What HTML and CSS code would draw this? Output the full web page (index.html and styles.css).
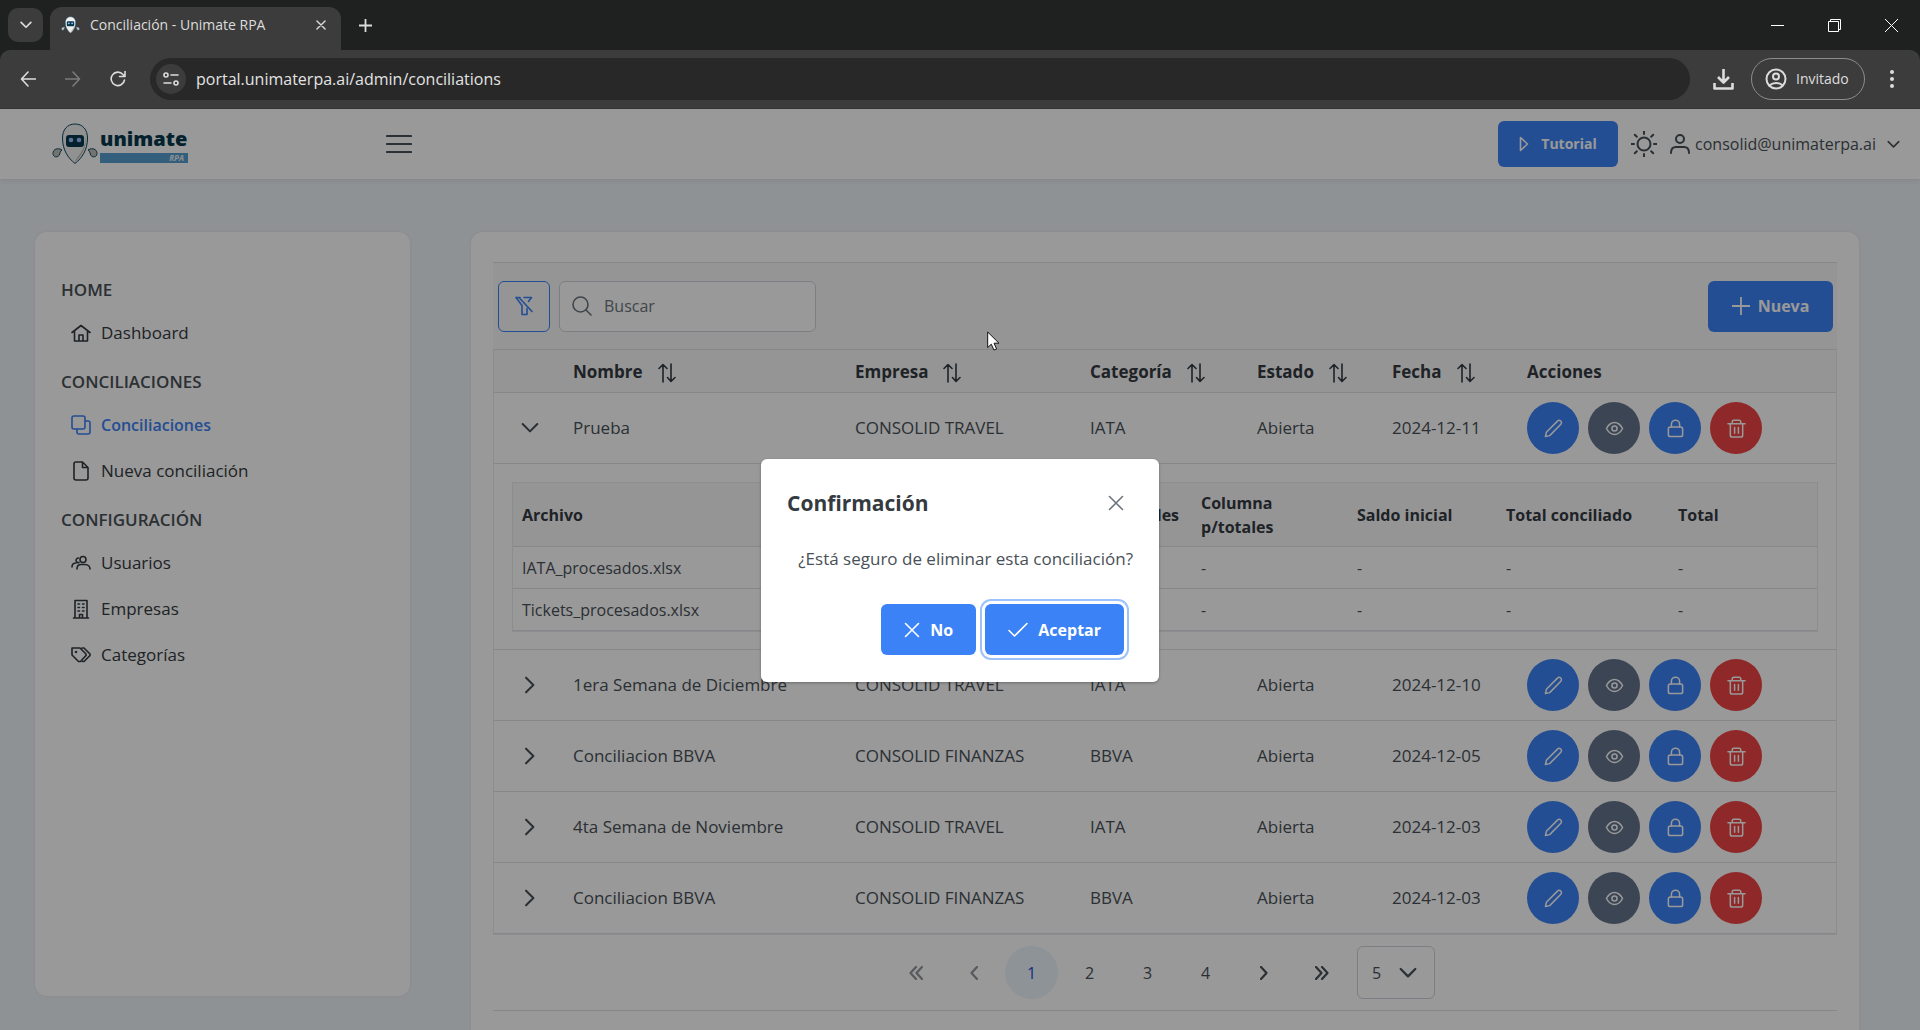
FILE: index.html
```html
<!DOCTYPE html>
<html lang="es">
<head>
<meta charset="utf-8">
<title>Conciliación - Unimate RPA</title>
<link rel="stylesheet" href="styles.css">
</head>
<body>
<svg class="sprite" aria-hidden="true">
  <symbol id="i-chev" viewBox="0 0 16 16"><path d="M1.5 4.5 8 11l6.5-6.5"/></symbol>
  <symbol id="i-right" viewBox="0 0 16 16"><path d="M4.5 1.500 11 8l-6.500 6.500"/></symbol>
  <symbol id="i-x" viewBox="0 0 16 16"><path d="M1.500 1.500l13 13M14.500 1.500l-13 13"/></symbol>
  <symbol id="i-plus" viewBox="0 0 16 16"><path d="M8 0v16M0 8h16"/></symbol>
  <symbol id="i-check" viewBox="0 0 20 16"><path d="M1 8.500 6.500 14 19 1.500"/></symbol>
  <symbol id="i-sort" viewBox="0 0 18 20"><path d="M5 19V2M1 5.500 5 1.500l4 4M13 1v17M9.500 14.500l3.500 4 4-4"/></symbol>
  <symbol id="i-pencil" viewBox="0 0 20 20"><path d="M1.500 18.500l1-4.500L14.200 2.200a2.300 2.300 0 0 1 3.500 3.300L6 17.500z"/></symbol>
  <symbol id="i-eye" viewBox="0 0 20 20"><path d="M1.500 10C4 5.500 7 3.700 10 3.700s6 1.800 8.500 6.300c-2.500 4.500-5.500 6.300-8.500 6.300S4 14.500 1.500 10z"/><circle cx="10" cy="10" r="2.700"/></symbol>
  <symbol id="i-lock" viewBox="0 0 20 20"><rect x="2.500" y="8.500" width="15" height="10" rx="2"/><path d="M5.700 8.500V5.500a4.300 4.300 0 0 1 8.600 0v3"/></symbol>
  <symbol id="i-trash" viewBox="0 0 20 20"><path d="M1 5h18M3.500 5v12a2 2 0 0 0 2 2h9a2 2 0 0 0 2-2V5M5.500 5V3a1.700 1.700 0 0 1 1.700-1.700h5.600A1.700 1.700 0 0 1 14.500 3v2M8 9v6M12 9v6"/></symbol>
  <symbol id="i-robot" viewBox="0 0 46 42"><path d="M23 1c-8 0-12.500 6-12.500 14C10.500 27 16 35 23 40.500 30 35 35.500 27 35.500 15 35.500 7 31 1 23 1z" fill="#f2f2f2" stroke="#0d4a63" stroke-width="1"/><path d="M34 14c0 11-4 18-11 25 1-5 9-8 11-25z" fill="#b9b4ae"/><rect x="14" y="12" width="18" height="12" rx="3" fill="#063a4e"/><circle cx="19" cy="17" r="2.300" fill="#9dbfff"/><circle cx="27" cy="17" r="2.300" fill="#9dbfff"/><path d="M8 26c-4-1-7 1-7 4.500s4 4.500 6 2c1.500-2 .5-4 3-5.500zM38 26c4-1 7 1 7 4.500s-4 4.500-6 2c-1.500-2-.5-4-3-5.500z" fill="#c4c0bb" stroke="#0d4a63" stroke-width="1"/></symbol>
</svg>

<div class="browser">
  <div class="tabstrip">
    <button class="tabsearch" aria-label="Buscar pestañas"><svg width="12" height="12" class="ic bold"><use href="#i-chev"/></svg></button>
    <div class="tab">
      <svg width="19" height="18"><use href="#i-robot"/></svg>
      <span class="tabtitle">Conciliación - Unimate RPA</span>
      <button class="plain" aria-label="Cerrar pestaña"><svg width="10" height="10" class="ic bold"><use href="#i-x"/></svg></button>
    </div>
    <button class="plain newtab" aria-label="Nueva pestaña"><svg width="13" height="13" class="ic bold"><use href="#i-plus"/></svg></button>
    <div class="winbtns">
      <button class="plain" aria-label="Minimizar"><svg width="13" height="13" class="thin"><path d="M0 6.500h13"/></svg></button>
      <button class="plain" aria-label="Restaurar"><svg width="13" height="13" class="thin"><path d="M.5 2.500h10v10H.500zM2.500 2.500V.500h10v10h-2"/></svg></button>
      <button class="plain" aria-label="Cerrar"><svg width="13" height="13" class="thin"><path d="M0 0l13 13M13 0 0 13"/></svg></button>
    </div>
  </div>
  <div class="toolbar">
    <div class="nav">
      <button class="plain" aria-label="Atrás"><svg width="16" height="16" class="ic"><path d="M16 8H1.500M8 1 1.500 8 8 15"/></svg></button>
      <button class="plain dim" aria-label="Adelante"><svg width="16" height="16" class="ic"><path d="M0 8h14.500M8 1l6.500 7L8 15"/></svg></button>
      <button class="plain" aria-label="Recargar"><svg width="16" height="16" class="ic"><path d="M14.500 9A6.700 6.700 0 1 1 13 3.500L15 5.500M15 0v5.500H9.500"/></svg></button>
    </div>
    <div class="omnibox">
      <button class="site" aria-label="Información del sitio"><svg width="16" height="14" class="ic"><circle cx="3" cy="3" r="2"/><path d="M8 3h7M1 11h7"/><circle cx="13" cy="11" r="2"/></svg></button>
      <input class="url" aria-label="Dirección" value="portal.unimaterpa.ai/admin/conciliations">
    </div>
    <button class="plain" aria-label="Descargas"><svg width="21" height="21" class="ic dl"><path d="M10.500 0v13M5 8l5.500 5.500L16 8M1.500 14v5.500h18V14"/></svg></button>
    <button class="guest"><svg width="22" height="22" class="ic"><circle cx="11" cy="11" r="9.500"/><circle cx="11" cy="8.500" r="3"/><path d="M4.500 17.500c3.500-3.500 9.500-3.500 13 0"/></svg>Invitado</button>
    <button class="plain kebab" aria-label="Menú"><svg width="4" height="18" fill="currentColor"><circle cx="2" cy="2" r="2"/><circle cx="2" cy="9" r="2"/><circle cx="2" cy="16" r="2"/></svg></button>
  </div>
</div>

<div class="viewport">
  <header class="topbar">
    <a class="logo" href="#"><svg width="46" height="42"><use href="#i-robot"/></svg><span class="brand"><b>unimate</b><i>RPA</i></span></a>
    <button class="plain burger" aria-label="Menú lateral"><svg width="26" height="20" class="ic"><path d="M1 2h24M1 10h24M1 18h24"/></svg></button>
    <div class="account">
      <button class="btn tutorial"><svg width="10" height="16" class="ic"><path d="M1.500 1.500 8.500 8l-7 6.500z"/></svg>Tutorial</button>
      <button class="plain" aria-label="Tema"><svg width="26" height="26" class="ic"><circle cx="13" cy="13" r="6.500"/><path d="M13 0v3M13 23v3M0 13h3M23 13h3M3.800 3.800l2 2M20.200 20.200l2 2M3.800 22.200l2-2M20.200 5.800l2-2"/></svg></button>
      <button class="plain user"><svg width="20" height="20" class="ic"><circle cx="10" cy="5" r="4"/><path d="M1 19c0-4 2-6 5-6h8c3 0 5 2 5 6"/></svg>consolid@unimaterpa.ai<svg width="13" height="13" class="ic bold"><use href="#i-chev"/></svg></button>
    </div>
  </header>

  <div class="layout">
    <nav class="sidebar">
      <h2>HOME</h2>
      <a href="#"><svg width="20" height="18" class="ic"><path d="M1 8.500 10 1.500l9 7M3.500 7v10h13V7M8 17v-6h4v6"/></svg>Dashboard</a>
      <h2>CONCILIACIONES</h2>
      <a href="#" class="active"><svg width="20" height="20" class="ic"><rect x="1" y="1" width="13" height="13" rx="2"/><path d="M14 6h3a2 2 0 0 1 2 2v9a2 2 0 0 1-2 2H8a2 2 0 0 1-2-2v-3"/></svg>Conciliaciones</a>
      <a href="#"><svg width="20" height="20" class="ic"><path d="M11.500 1H5a2 2 0 0 0-2 2v14a2 2 0 0 0 2 2h10a2 2 0 0 0 2-2V6.500zM11.500 1v5.500H17"/></svg>Nueva conciliación</a>
      <h2>CONFIGURACIÓN</h2>
      <a href="#"><svg width="20" height="16" class="ic"><circle cx="12" cy="4.500" r="3"/><path d="M6 14c0-3 2-4.500 4-4.500h4c3 0 5 2 5 4.500M7.500 3a2.300 2.300 0 1 0 .5 4.500M1 12c0-2.500 1.500-4 4-4"/></svg>Usuarios</a>
      <a href="#"><svg width="20" height="20" class="ic"><path d="M4 19V1.500h12V19M2.500 19h15M8.500 19v-3.500h3V19M7 5h1.500M11.500 5H13M7 8.500h1.500M11.500 8.500H13M7 12h1.500M11.500 12H13"/></svg>Empresas</a>
      <a href="#"><svg width="20" height="18" class="ic"><path d="M1 2v7l6.500 6.500h2L15 9.500V8L9 2zM11 2h2l6 6v1.500L13 15.500h-1.500"/><circle cx="5" cy="6" r=".5"/></svg>Categorías</a>
    </nav>

    <main class="card">
      <div class="tools">
        <button class="filter" aria-label="Limpiar filtros"><svg width="18" height="20" class="ic"><path d="M1 1.500h4M1 1.500l6 8V18.500h5v-6M9 1.500h7.500l-3 4M4 1.500l13 14"/></svg></button>
        <label class="search"><svg width="20" height="20" class="ic"><circle cx="8.500" cy="8.500" r="7.500"/><path d="M14 14l5 5"/></svg><input placeholder="Buscar" aria-label="Buscar"></label>
        <button class="btn new"><svg width="18" height="18" class="ic"><use href="#i-plus"/></svg>Nueva</button>
      </div>
      <table class="grid">
        <colgroup><col class="c0"><col class="c1"><col class="c2"><col class="c3"><col class="c4"><col class="c5"><col></colgroup>
        <thead><tr><th></th>
          <th>Nombre<svg width="18" height="20" class="ic"><use href="#i-sort"/></svg></th>
          <th>Empresa<svg width="18" height="20" class="ic"><use href="#i-sort"/></svg></th>
          <th>Categoría<svg width="18" height="20" class="ic"><use href="#i-sort"/></svg></th>
          <th>Estado<svg width="18" height="20" class="ic"><use href="#i-sort"/></svg></th>
          <th>Fecha<svg width="18" height="20" class="ic"><use href="#i-sort"/></svg></th>
          <th>Acciones</th></tr></thead>
        <tbody id="rows"></tbody>
      </table>
      <div class="pager">
        <button class="off" aria-label="Primera"><svg width="14" height="14" class="ic bold"><path d="M7 1 1.500 7 7 13M13 1 7.500 7l5.500 6"/></svg></button>
        <button class="off" aria-label="Anterior"><svg width="8" height="14" class="ic bold"><path d="M7 1 1.500 7 7 13"/></svg></button>
        <button class="current">1</button><button>2</button><button>3</button><button>4</button>
        <button aria-label="Siguiente"><svg width="8" height="14" class="ic bold"><path d="M1 1l5.500 6L1 13"/></svg></button>
        <button aria-label="Última"><svg width="14" height="14" class="ic bold"><path d="M1 1l5.500 6L1 13M7 1l5.500 6L7 13"/></svg></button>
        <span class="size"><select aria-label="Filas por página"><option>5</option><option>10</option></select><svg width="18" height="18" class="ic"><use href="#i-chev"/></svg></span>
      </div>
    </main>
  </div>

  <div class="mask">
    <div class="dialog" role="dialog" aria-modal="true" aria-labelledby="dlg-title">
      <div class="dlg-head"><h1 id="dlg-title">Confirmación</h1><button class="plain" aria-label="Cerrar diálogo"><svg width="16" height="16" class="ic"><use href="#i-x"/></svg></button></div>
      <p>¿Está seguro de eliminar esta conciliación?</p>
      <div class="dlg-foot">
        <button class="btn"><svg width="16" height="16" class="ic"><use href="#i-x"/></svg>No</button>
        <button class="btn focus"><svg width="20" height="16" class="ic"><use href="#i-check"/></svg>Aceptar</button>
      </div>
    </div>
  </div>
</div>
<svg class="cursor" width="13" height="20" viewBox="0 0 13 20" aria-hidden="true"><path d="M.7 1v15.500l3.600-3.300 2.600 5.800 2.700-1.100L7 12.200h5z" fill="#fff" stroke="#111"/></svg>
<script src="app.js"></script>
</body>
</html>
```
FILE: app.js
```js
const rows = [
  ["Prueba", "CONSOLID TRAVEL", "IATA", "2024-12-11", true],
  ["1era Semana de Diciembre", "CONSOLID TRAVEL", "IATA", "2024-12-10"],
  ["Conciliacion BBVA", "CONSOLID FINANZAS", "BBVA", "2024-12-05"],
  ["4ta Semana de Noviembre", "CONSOLID TRAVEL", "IATA", "2024-12-03"],
  ["Conciliacion BBVA", "CONSOLID FINANZAS", "BBVA", "2024-12-03"]
];
const icon = (name, size) => `<svg width="${size}" height="${size}" class="ic"><use href="#i-${name}"/></svg>`;
const actions = [["pencil", "Editar", ""], ["eye", "Ver", "grey"], ["lock", "Cerrar", ""], ["trash", "Eliminar", "red"]]
  .map(([i, label, cls]) => `<button class="round ${cls}" aria-label="${label}">${icon(i, 19)}</button>`).join("");
const file = name => `<tr><td>${name}</td><td></td><td>-</td><td>-</td><td>-</td><td>-</td></tr>`;
const detail = `<tr class="detail"><td colspan="7"><table class="files">
  <colgroup><col class="f0"><col class="f1"><col class="f2"><col class="f3"><col class="f4"><col></colgroup>
  <thead><tr><th>Archivo</th><th>Totales</th><th>Columna p/totales</th><th>Saldo inicial</th><th>Total conciliado</th><th>Total</th></tr></thead>
  <tbody>${file("IATA_procesados.xlsx")}${file("Tickets_procesados.xlsx")}</tbody></table></td></tr>`;
document.getElementById("rows").innerHTML = rows.map(([name, company, category, date, open]) =>
  `<tr class="row"><td><button class="plain" aria-label="Detalle">${icon(open ? "chev" : "right", 18)}</button></td>
  <td>${name}</td><td>${company}</td><td>${category}</td><td>Abierta</td><td>${date}</td>
  <td><div class="actions">${actions}</div></td></tr>${open ? detail : ""}`).join("");
```
FILE: styles.css
```css
* { box-sizing: border-box; }
body { margin: 0; height: 100vh; display: flex; flex-direction: column; overflow: hidden; font: 16px/24px "Open Sans", "Noto Sans", sans-serif; color: #495057; }
button, input, select { font: inherit; color: inherit; }
button { cursor: pointer; }
a { color: inherit; text-decoration: none; }
svg { flex: none; display: block; }
.sprite { position: absolute; width: 0; height: 0; }
.ic { fill: none; stroke: currentColor; stroke-width: 1.6; stroke-linejoin: round; stroke-linecap: round; }
.bold { stroke-width: 2.2; }
.thin { fill: none; stroke: #fff; stroke-width: 1; }
.plain { background: none; border: 0; padding: 0; display: flex; align-items: center; }

/* browser frame */
.browser { background: #1f2120; color: #dcdcdc; flex: none; }
.tabstrip { height: 50px; display: flex; align-items: center; padding-left: 8px; }
.tabsearch { width: 35px; height: 34px; border: 0; border-radius: 10px; background: #3c3c3c; display: grid; place-items: center; margin-right: 7px; padding: 0; }
.tab { align-self: stretch; margin-top: 7px; width: 291px; background: #3c3c3c; border-radius: 12px 12px 0 0; display: flex; align-items: center; gap: 10px; padding: 0 15px 7px 11px; font-size: 14px; }
.tabtitle { flex: 1; }
.newtab { margin-left: 18px; }
.winbtns { margin-left: auto; display: flex; gap: 44px; padding-right: 22px; }
.toolbar { height: 59px; background: #3c3c3c; border-radius: 10px 10px 0 0; border-bottom: 1px solid #343434; display: flex; align-items: center; padding-right: 26px; }
.nav { width: 150px; display: flex; gap: 29px; padding-left: 20px; }
.dim { color: #7b7b7b; }
.omnibox { flex: 1; height: 42px; border-radius: 21px; background: #282828; display: flex; align-items: center; gap: 10px; padding-left: 6px; margin-right: 23px; }
.site { width: 30px; height: 30px; border: 0; border-radius: 50%; background: #3c3c3c; display: grid; place-items: center; padding: 0; }
.url { flex: 1; background: none; border: 0; padding: 0; color: #e3e3e3; outline: 0; }
.dl { stroke-width: 2.6; stroke-linecap: butt; }
.guest { margin-left: 17px; width: 114px; height: 42px; border: 1px solid #8c8c8c; border-radius: 21px; background: none; display: flex; align-items: center; gap: 9px; padding: 0 0 0 13px; font-size: 14px; }
.guest .ic { stroke-width: 2; }
.kebab { margin-left: 25px; }

/* application */
.viewport { flex: 1; min-height: 0; position: relative; overflow: hidden; background: #eff3f8; }
.topbar { height: 70px; background: #fff; display: flex; align-items: center; padding: 0 20px 0 52px; box-shadow: 0 2px 5px rgba(0, 0, 0, .08); }
.logo { width: 334px; display: flex; align-items: center; gap: 2px; }
.brand { width: 88px; display: flex; flex-direction: column; }
.brand b { font: 800 20px/28px "Open Sans", sans-serif; color: #063a4e; }
.brand i { background: #559fd0; color: #e6eef4; font-size: 8px; line-height: 10px; font-weight: 700; text-align: right; padding-right: 4px; }
.burger .ic { stroke-width: 2.2; }
.account { margin-left: auto; display: flex; align-items: center; gap: 13px; }
.user { gap: 5px; }
.user .bold { margin-left: 6px; }
.user .ic, .account > .plain .ic { stroke-width: 2; }
.btn { height: 51px; border: 0; border-radius: 6px; background: #3b82f6; color: #fff; font-weight: 700; display: flex; align-items: center; justify-content: center; gap: 10px; padding: 0 23px; }
.tutorial { height: 46px; width: 120px; font-size: 14px; gap: 12px; padding: 0; }
.layout { display: flex; align-items: flex-start; gap: 61px; padding: 53px 61px 0 35px; }
.sidebar { width: 375px; height: 764px; background: #fff; border-radius: 12px; padding: 34px 26px; box-shadow: 0 0 4px rgba(0, 0, 0, .06); }
.sidebar h2 { margin: 10px 0 6px; font-size: 17px; line-height: 28px; font-weight: 600; }
.sidebar a + h2 { margin-top: 12px; }
.sidebar a { display: flex; align-items: center; gap: 10px; height: 46px; padding-left: 10px; font-size: 17px; line-height: 24px; color: #343a40; }
.sidebar .active { color: #3b82f6; font-size: 16px; font-weight: 600; }

.card { flex: 1; min-width: 0; height: 900px; background: #fff; border-radius: 12px; padding: 30px 22px; box-shadow: 0 0 4px rgba(0, 0, 0, .06); }
.tools { height: 88px; border: 1px solid #dee2e6; border-width: 1px 0; background: #f8f9fa; display: flex; align-items: center; padding: 0 4px 0 5px; }
.filter { width: 52px; height: 51px; border: 1px solid #3b82f6; border-radius: 6px; background: none; color: #3b82f6; display: grid; place-items: center; padding: 0; }
.search { margin-left: 9px; width: 257px; height: 51px; border: 1px solid #ced4da; border-radius: 6px; background: #fff; display: flex; align-items: center; gap: 12px; padding: 0 12px; color: #6c757d; }
.search input { width: 190px; border: 0; padding: 0; background: none; outline: 0; }
.search input::placeholder { color: #6c757d; opacity: 1; }
.new { margin-left: auto; width: 125px; padding: 0; gap: 8px; }
table { width: 100%; table-layout: fixed; border-collapse: separate; border-spacing: 0; }
th { text-align: left; font-weight: 700; color: #343a40; background: #f8f9fa; }
th, td { border-bottom: 1px solid #dee2e6; padding: 0 17px; }
.grid { border: 1px solid #e9ecef; border-top: 0; font-size: 17px; }
.grid > thead th { height: 43px; padding-top: 2px; white-space: nowrap; }
th .ic { display: inline-block; vertical-align: middle; margin-left: 15px; }
.c0 { width: 62px; } .c1 { width: 282px; } .c2 { width: 235px; } .c3 { width: 167px; } .c4 { width: 135px; } .c5 { width: 135px; }
.row > td { height: 71px; }
.row > td:first-child { padding-left: 27px; }
.row .plain .ic { stroke-width: 1.8; }
.actions { display: flex; gap: 9px; }
.round { width: 52px; height: 52px; border: 0; border-radius: 50%; background: #3b82f6; color: #fff; display: grid; place-items: center; padding: 0; }
.grey { background: #64748b; }
.red { background: #ef4444; }
.detail > td { padding: 18px 18px 17px; }
.files { border: 1px solid #e9ecef; font-size: 16px; }
.files th { height: 64px; }
.files td { height: 42px; }
.files th, .files td { padding: 0 9px; }
.f0 { width: 599px; } .f1 { width: 80px; } .f2 { width: 156px; } .f3 { width: 149px; } .f4 { width: 172px; }
.pager { height: 76px; border-bottom: 1px solid #dee2e6; display: flex; align-items: center; justify-content: center; gap: 5px; padding-right: 6px; }
.pager button { width: 53px; height: 53px; border: 0; border-radius: 50%; background: none; display: grid; place-items: center; padding: 0; }
.pager .off { opacity: .6; }
.pager .current { background: #ebf5fb; color: #1d4ed8; }
.size { position: relative; margin-left: 4px; color: #495057; }
.size select { width: 78px; height: 53px; border: 1px solid #ced4da; border-radius: 6px; background: #fff; appearance: none; padding-left: 14px; display: block; }
.size .ic { position: absolute; right: 18px; top: 18px; pointer-events: none; stroke-width: 2; }

/* confirmation */
.mask { position: absolute; inset: 0; background: rgba(0, 0, 0, .4); display: flex; align-items: center; justify-content: center; padding-top: 2px; }
.dialog { width: 398px; background: #fff; border-radius: 6px; box-shadow: 0 1px 3px rgba(0, 0, 0, .3); padding: 26px 26px 27px; }
.dlg-head { display: flex; align-items: center; justify-content: space-between; padding: 0 9px 0 0; color: #6c757d; height: 36px; }
.dlg-head h1 { margin: 0; font-size: 21px; line-height: 28px; font-weight: 700; color: #343a40; }
.dialog p { margin: 26px 0 33px; font-size: 17px; line-height: 24px; text-align: right; white-space: nowrap; }
.dlg-foot { display: flex; justify-content: flex-end; gap: 9px; padding-right: 9px; }
.focus { box-shadow: 0 0 0 3px #fff, 0 0 0 5px #9dc1fb; }
.cursor { position: fixed; left: 987px; top: 331px; }
```
